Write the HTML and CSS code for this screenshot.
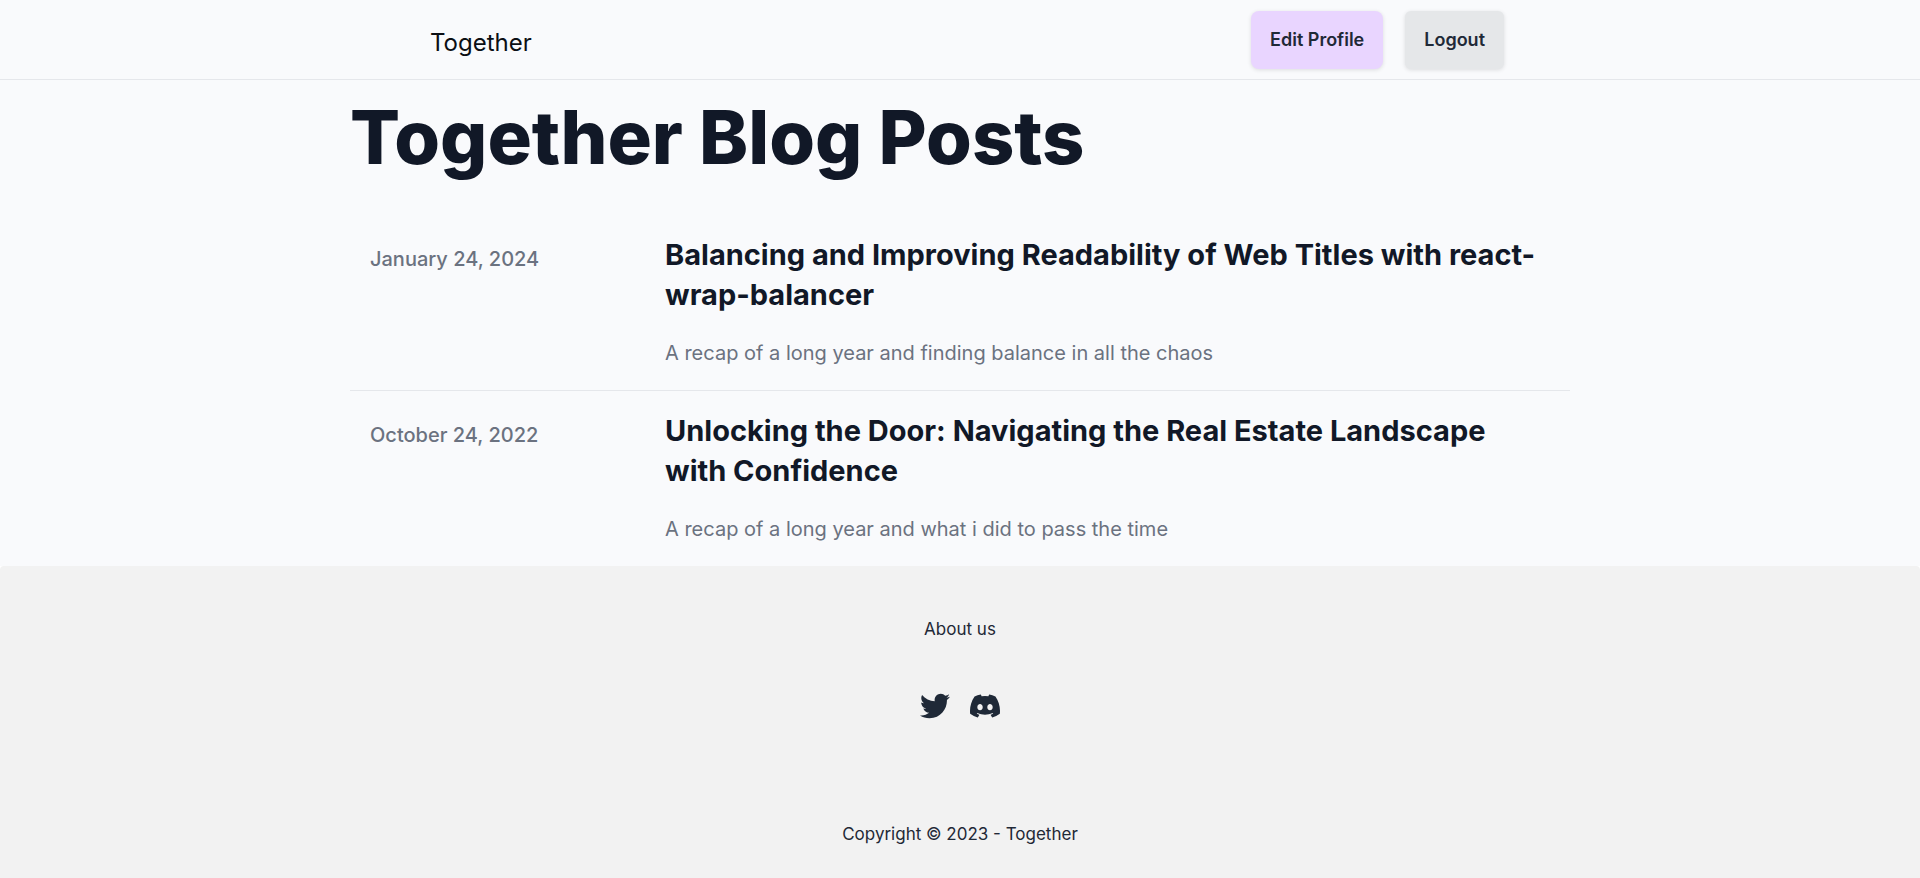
FILE: index.html
```html
<!DOCTYPE html>
<html lang="en">
<head>
  <meta charset="utf-8">
  <meta name="viewport" content="width=device-width, initial-scale=1">
  <title>Together</title>
  <link rel="stylesheet" href="styles.css">
</head>
<body>
  <header class="site-header">
    <div class="header-inner">
      <a class="brand" href="#">Together</a>
      <nav class="header-actions">
        <button class="btn btn-primary" type="button">Edit Profile</button>
        <button class="btn btn-muted" type="button">Logout</button>
      </nav>
    </div>
  </header>

  <main class="content">
    <h1 class="page-title">Together Blog Posts</h1>
    <ul class="posts">
      <li class="post">
        <time class="post-date" datetime="2024-01-24">January 24, 2024</time>
        <article class="post-body">
          <h2 class="post-title"><a href="#">Balancing and Improving Readability of Web Titles with react-<wbr>wrap-balancer</a></h2>
          <p class="post-summary">A recap of a long year and finding balance in all the chaos</p>
        </article>
      </li>
      <li class="post">
        <time class="post-date" datetime="2022-10-24">October 24, 2022</time>
        <article class="post-body">
          <h2 class="post-title"><a href="#">Unlocking the Door: Navigating the Real Estate Landscape with Confidence</a></h2>
          <p class="post-summary">A recap of a long year and what i did to pass the time</p>
        </article>
      </li>
    </ul>
  </main>

  <div class="footer-wrap">
    <footer class="site-footer">
      <a class="footer-link" href="#">About us</a>
      <nav class="social">
        <a href="#" aria-label="Twitter">
          <svg class="social-icon" viewBox="0 0 512 512" aria-hidden="true"><path d="M459.37 151.716c.325 4.548.325 9.097.325 13.645 0 138.72-105.583 298.558-298.558 298.558-59.452 0-114.68-17.219-161.137-47.106 8.447.974 16.568 1.299 25.34 1.299 49.055 0 94.213-16.568 130.274-44.832-46.132-.975-84.792-31.188-98.112-72.772 6.498.974 12.995 1.624 19.818 1.624 9.421 0 18.843-1.3 27.614-3.573-48.081-9.747-84.143-51.98-84.143-102.985v-1.299c13.969 7.797 30.214 12.67 47.431 13.319-28.264-18.843-46.781-51.005-46.781-87.391 0-19.492 5.197-37.36 14.294-52.954 51.655 63.675 129.3 105.258 216.365 109.807-1.624-7.797-2.599-15.918-2.599-24.04 0-57.828 46.782-104.934 104.934-104.934 30.213 0 57.502 12.67 76.67 33.137 23.715-4.548 46.456-13.32 66.599-25.34-7.798 24.366-24.366 44.833-46.132 57.827 21.117-2.273 41.584-8.122 60.426-16.243-14.292 20.791-32.161 39.308-52.628 54.253z"/></svg>
        </a>
        <a href="#" aria-label="Discord">
          <svg class="social-icon" viewBox="0 0 24 24" aria-hidden="true"><path d="M20.317 4.37a19.79 19.79 0 0 0-4.885-1.515.074.074 0 0 0-.079.037c-.21.375-.444.864-.608 1.25a18.27 18.27 0 0 0-5.487 0 12.64 12.64 0 0 0-.617-1.25.077.077 0 0 0-.079-.037A19.736 19.736 0 0 0 3.677 4.37a.07.07 0 0 0-.032.027C.533 9.046-.32 13.58.099 18.057a.082.082 0 0 0 .031.057 19.9 19.9 0 0 0 5.993 3.03.078.078 0 0 0 .084-.028c.462-.63.874-1.295 1.226-1.994a.076.076 0 0 0-.041-.106 13.107 13.107 0 0 1-1.872-.892.077.077 0 0 1-.008-.128c.126-.094.252-.192.372-.292a.074.074 0 0 1 .077-.01c3.928 1.793 8.18 1.793 12.062 0a.074.074 0 0 1 .078.01c.12.098.246.198.373.292a.077.077 0 0 1-.006.127 12.3 12.3 0 0 1-1.873.892.077.077 0 0 0-.041.107c.36.698.772 1.362 1.225 1.993a.076.076 0 0 0 .084.028 19.839 19.839 0 0 0 6.002-3.03.077.077 0 0 0 .032-.054c.5-5.177-.838-9.674-3.549-13.66a.061.061 0 0 0-.031-.03zM8.02 15.33c-1.183 0-2.157-1.085-2.157-2.419s.956-2.419 2.157-2.419c1.21 0 2.176 1.096 2.157 2.42 0 1.333-.956 2.418-2.157 2.418zm7.975 0c-1.183 0-2.157-1.085-2.157-2.419s.955-2.419 2.157-2.419c1.21 0 2.176 1.096 2.157 2.42 0 1.333-.946 2.418-2.157 2.418z"/></svg>
        </a>
      </nav>
      <p class="copyright">Copyright © 2023 - Together</p>
    </footer>
  </div>
</body>
</html>
```

FILE: styles.css
```css
* {
  box-sizing: border-box;
}

body {
  display: flex;
  flex-direction: column;
  min-height: 100vh;
  margin: 0;
  background: #f9fafc;
  color: #1f2937;
  font-family: Inter, "Liberation Sans", sans-serif;
}

a {
  color: inherit;
  text-decoration: none;
}

h1,
h2,
p,
ul {
  margin: 0;
  padding: 0;
}

.site-header {
  padding: 11px 16px 10px;
  border-bottom: 1px solid #e5e7eb;
}

.header-inner {
  display: flex;
  align-items: center;
  justify-content: space-between;
  max-width: 1088px;
  margin: 0 auto;
}

.brand {
  padding-top: 6px;
  padding-left: 14px;
  color: #0b0f14;
  font-size: 24px;
  line-height: 32px;
}

.header-actions {
  display: flex;
  gap: 22px;
}

.btn {
  height: 58px;
  padding: 0 19px;
  border: 0;
  border-radius: 8px;
  color: #1f2937;
  font: 600 18px/24px Inter, "Liberation Sans", sans-serif;
  box-shadow: 0 1px 4px rgba(0, 0, 0, 0.12);
  cursor: pointer;
}

.btn-primary {
  background: #e9d5ff;
}

.btn-muted {
  border-radius: 6px;
  background: #e5e7e9;
}

.content {
  width: 100%;
  max-width: 1220px;
  margin: 0 auto;
}

.page-title {
  padding: 19px 0 40px;
  color: #111827;
  font-size: 74px;
  font-weight: 800;
  line-height: 76px;
}

.posts {
  list-style: none;
}

.post {
  display: grid;
  grid-template-columns: 1fr 3fr;
  padding: 20px 20px 22px;
}

.post + .post {
  border-top: 1px solid #e5e7eb;
}

.post-date,
.post-summary {
  color: #6b7280;
  font-size: 20px;
  line-height: 30px;
}

.post-date {
  padding-top: 9px;
  font-weight: 500;
}

.post-title {
  color: #111827;
  font-size: 29px;
  font-weight: 700;
  line-height: 40px;
}

.post-summary {
  padding-top: 23px;
}

.footer-wrap {
  display: flex;
  flex: 1;
  background: #fff;
}

.site-footer {
  display: flex;
  flex: 1;
  flex-direction: column;
  align-items: center;
  gap: 50px;
  padding: 51px 40px 32px;
  border-radius: 4px 4px 0 0;
  background: #f2f2f2;
  font-size: 17px;
  line-height: 24px;
}

.social {
  display: flex;
  gap: 20px;
}

.social a {
  display: block;
}

.social-icon {
  display: block;
  width: 30px;
  height: 30px;
  fill: #1f2937;
}

.copyright {
  margin-top: auto;
}
```
